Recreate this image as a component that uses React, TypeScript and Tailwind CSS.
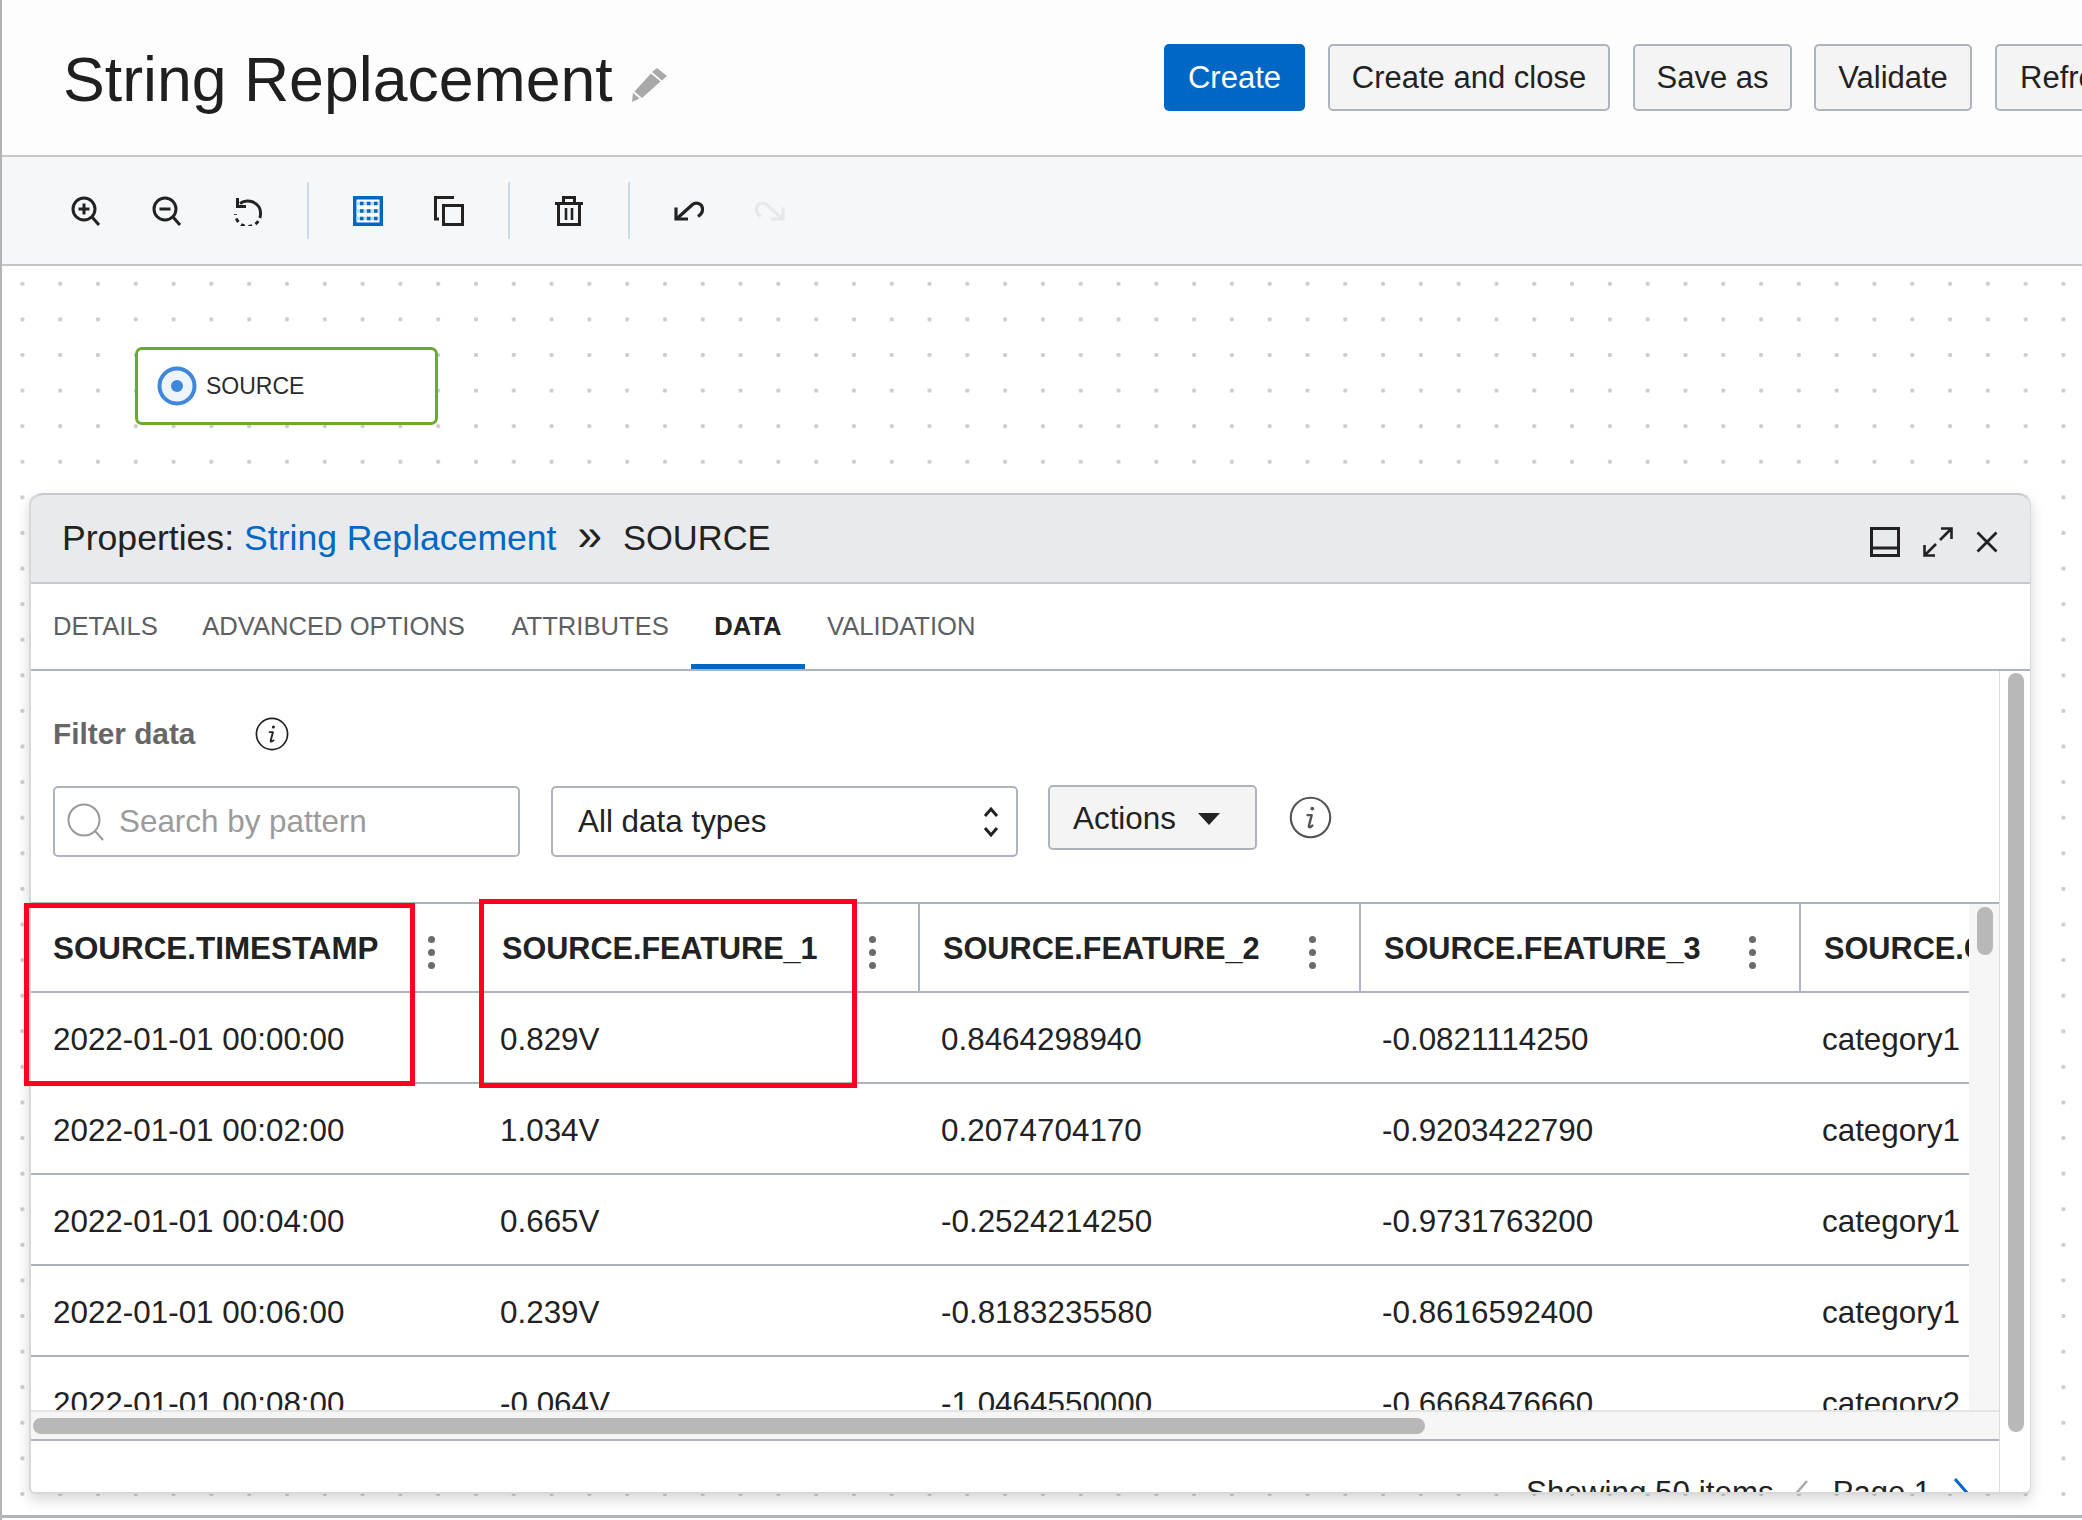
import React from 'react';

const columns = ['w-[446px]', 'w-[441px]', 'w-[441px]', 'w-[440px]', 'w-[200px]'];

const headers = [
  { label: 'SOURCE.TIMESTAMP', pad: 'pl-[22px] text-[31.400px]', kebab: 'right-[42px]' },
  { label: 'SOURCE.FEATURE_1', pad: 'pl-[25px] text-[30.600px]', kebab: 'right-[42px]' },
  { label: 'SOURCE.FEATURE_2', pad: 'pl-[23px] text-[30.700px]', kebab: 'right-[43px]' },
  { label: 'SOURCE.FEATURE_3', pad: 'pl-[23px] text-[30.700px]', kebab: 'right-[43px]' },
  { label: 'SOURCE.CATEGORY', pad: 'pl-[23px] text-[30.700px]', kebab: '' },
];

const rows = [
  ['2022-01-01 00:00:00', '0.829V', '0.8464298940', '-0.0821114250', 'category1'],
  ['2022-01-01 00:02:00', '1.034V', '0.2074704170', '-0.9203422790', 'category1'],
  ['2022-01-01 00:04:00', '0.665V', '-0.2524214250', '-0.9731763200', 'category1'],
  ['2022-01-01 00:06:00', '0.239V', '-0.8183235580', '-0.8616592400', 'category1'],
  ['2022-01-01 00:08:00', '-0.064V', '-1.0464550000', '-0.6668476660', 'category2'],
];

function ToolIcon({ children, className = 'text-[#222]' }: { children: React.ReactNode; className?: string }) {
  return (
    <svg viewBox="0 0 30 30" className={`h-[30px] w-[30px] ${className}`} fill="none" stroke="currentColor" strokeWidth="3">
      {children}
    </svg>
  );
}

function Separator() {
  return <div className="mx-[39px] h-[57px] w-[2px] bg-[#cfdbe4]" />;
}

function ToolSlot({ children }: { children: React.ReactNode }) {
  return <div className="flex w-[40px] justify-center">{children}</div>;
}

function Kebab() {
  return (
    <div className="flex flex-col gap-[6px]">
      <span className="h-[7px] w-[7px] rounded-full bg-[#6b6b6b]" />
      <span className="h-[7px] w-[7px] rounded-full bg-[#6b6b6b]" />
      <span className="h-[7px] w-[7px] rounded-full bg-[#6b6b6b]" />
    </div>
  );
}

function InfoIcon({ size }: { size: string }) {
  return (
    <svg viewBox="0 0 36 36" className={size} fill="none" stroke="currentColor" strokeWidth="1.8">
      <circle cx="18" cy="18" r="16.5" />
      <circle cx="19.5" cy="10.5" r="1.6" fill="currentColor" stroke="none" />
      <path d="M15.5 16h3.5l-2.4 9.2c-.3 1.2 1 1.4 3-.4" strokeWidth="2" strokeLinecap="round" strokeLinejoin="round" />
    </svg>
  );
}

export default function App() {
  return (
    <div className="relative flex h-[1520px] w-[2082px] flex-col overflow-hidden border-l-2 border-[#b4b4b4] bg-white font-['Liberation_Sans',Arial,sans-serif] text-[31px] text-[#222]">
      {/* Title bar */}
      <header className="flex h-[157px] shrink-0 items-start justify-between overflow-hidden border-b-2 border-[#c6c7c9] bg-[#fdfdfd]">
        <div className="flex items-center pl-[61px] pt-[41px]">
          <h1 className="text-[62.600px] leading-[76px] font-normal text-[#1f1f1f]">String Replacement</h1>
          <svg viewBox="0 0 36 36" className="mt-[12px] ml-[18px] h-[36px] w-[36px] text-[#a8a8a8]" fill="currentColor">
            <path d="M26 1l10 8-5 4.500-10-8.500zM20 6.500l9.500 8-18.500 16.500-7.500-6.500zM2 26l6.500 5.500L1 35z" />
          </svg>
        </div>
        <div className="flex w-[919px] shrink-0 gap-[23px] pt-[44px] pl-[1px]">
          <button className="h-[67px] w-[141px] shrink-0 rounded-[5px] bg-[#0067c5] pt-[2px] text-white">Create</button>
          <button className="h-[67px] w-[282px] shrink-0 rounded-[5px] border-2 border-[#aeb3bc] bg-[#f4f4f4] pt-[2px]">Create and close</button>
          <button className="h-[67px] w-[159px] shrink-0 rounded-[5px] border-2 border-[#aeb3bc] bg-[#f4f4f4] pt-[2px]">Save as</button>
          <button className="-ml-px h-[67px] w-[158px] shrink-0 rounded-[5px] border-2 border-[#aeb3bc] bg-[#f4f4f4] pt-[2px]">Validate</button>
          <button className="h-[67px] w-[160px] shrink-0 rounded-[5px] border-2 border-[#aeb3bc] bg-[#f4f4f4] pt-[2px] pl-[2px] text-left">
            <span className="pl-[21px]">Refresh</span>
          </button>
        </div>
      </header>

      {/* Toolbar */}
      <div className="flex h-[109px] shrink-0 items-center border-b-2 border-[#c6c7c9] bg-[#f5f7f9] pl-[64px]">
        <ToolSlot>
          <ToolIcon>
            <circle cx="13" cy="13" r="11" />
            <path d="M13 7.500v11M7.500 13h11" />
            <path d="M21 21l7 8" />
          </ToolIcon>
        </ToolSlot>
        <div className="w-[41px]" />
        <ToolSlot>
          <ToolIcon>
            <circle cx="13" cy="13" r="11" />
            <path d="M7.500 13h11" />
            <path d="M21 21l7 8" />
          </ToolIcon>
        </ToolSlot>
        <div className="w-[41px]" />
        <ToolSlot>
          <ToolIcon>
            <path d="M7 7.500C13 3 22 5 26 11c1.200 2 1.700 4.500 1.500 7" strokeWidth="3" />
            <path d="M27.500 18A12.500 12.500 0 0 1 2.500 18" strokeWidth="3" strokeDasharray="4 3.600" />
            <path d="M4.500 2v8.500H13" strokeWidth="3" />
          </ToolIcon>
        </ToolSlot>
        <Separator />
        <ToolSlot>
          <svg viewBox="0 0 30 30" className="h-[30px] w-[30px]">
            <rect width="30" height="30" fill="#0067c5" />
            <rect x="3.500" y="3.500" width="23" height="23" fill="#fff" />
            <path d="M3.500 7.500h23M3.500 15h23M3.500 22.500h23" stroke="#bcd8f2" strokeWidth="3.500" />
            <path d="M7 5.800h3.500v3.500H7zM14 5.800h3.500v3.500H14zM21 5.800h3.500v3.500H21zM7 13.200h3.500v3.500H7zM14 13.200h3.500v3.500H14zM21 13.200h3.500v3.500H21zM7 20.700h3.500v3.500H7zM14 20.700h3.500v3.500H14zM21 20.700h3.500v3.500H21z" fill="#0067c5" />
          </svg>
        </ToolSlot>
        <div className="w-[41px]" />
        <ToolSlot>
          <ToolIcon>
            <path d="M20 1.500H1.500V23H5" />
            <rect x="9.500" y="9.500" width="19" height="19" />
          </ToolIcon>
        </ToolSlot>
        <Separator />
        <ToolSlot>
          <ToolIcon>
            <path d="M1 7.500h28M9.500 7V1.500h11V7" />
            <path d="M4.500 7.500v21h21v-21" />
            <path d="M12 12v12M18 12v12" strokeWidth="2.600" />
          </ToolIcon>
        </ToolSlot>
        <Separator />
        <ToolSlot>
          <ToolIcon>
            <path d="M2.500 23L18 9c4-3.500 10-1.500 10.500 3.500.3 3-1.500 6-4.500 8" strokeWidth="3.200" />
            <path d="M2 11.500V23h12" strokeWidth="3.200" />
          </ToolIcon>
        </ToolSlot>
        <div className="w-[41px]" />
        <ToolSlot>
          <ToolIcon className="text-[#e6e9ec]">
            <path d="M27.500 23L12 9C8 5.500 2 7.500 1.500 12.500c-.3 3 1.500 6 4.500 8" strokeWidth="3.200" />
            <path d="M28 11.500V23H16" strokeWidth="3.200" />
          </ToolIcon>
        </ToolSlot>
      </div>

      {/* Canvas */}
      <div className="h-[1252px] shrink-0 border-b-[3px] border-[#aeb3bc] bg-white bg-[radial-gradient(circle,#cccccc_1.8px,transparent_2.4px)] bg-[size:37.8px_35.6px] bg-[position:1.5px_0px] pt-[81px]">
        <div className="ml-[133px] flex h-[78px] w-[303px] items-center rounded-[7px] border-[3px] border-[#6aab2d] bg-white pl-[19px]">
          <svg viewBox="0 0 40 40" className="h-[40px] w-[40px]">
            <circle cx="20" cy="20" r="17.500" fill="#eef4fb" stroke="#3f87dc" strokeWidth="4" />
            <circle cx="20" cy="20" r="6" fill="#3f87dc" />
          </svg>
          <span className="ml-[9px] text-[23px] text-[#2b2b2b]">SOURCE</span>
        </div>

        {/* Properties panel */}
        <section className="relative mt-[68px] ml-[27px] flex h-[1001px] w-[2002px] flex-col rounded-t-[12px] rounded-b-[6px] border-r border-b-2 border-l-2 border-[#d8d8d8] bg-white shadow-[0_6px_14px_rgba(0,0,0,0.16)]">
          <div className="flex h-[91px] shrink-0 items-center justify-between rounded-t-[12px] border-t-2 border-b-2 border-[#c6c8cc] bg-[#e8eaed] pr-[32px] pl-[31px]">
            <div className="-mt-[4px] flex items-baseline text-[35.600px] leading-[44px]">
              <span>Properties:</span>
              <span className="ml-[10px] text-[#0067c5]">String Replacement</span>
              <span className="mx-[21px] text-[44px] leading-none">»</span>
              <span className="text-[34.500px]">SOURCE</span>
            </div>
            <div className="flex items-center gap-[23px] pt-[6px]">
              <svg viewBox="0 0 30 30" className="h-[30px] w-[30px]" fill="none" stroke="#222" strokeWidth="3">
                <rect x="1.500" y="1.500" width="27" height="27" />
                <path d="M1 21h28" />
              </svg>
              <svg viewBox="0 0 30 30" className="h-[30px] w-[30px]" fill="none" stroke="#222" strokeWidth="2.600">
                <path d="M18 1.500h10.500V12M28.500 1.500L17 13M1.500 18v10.500H12M1.500 28.500L13 17" />
              </svg>
              <svg viewBox="0 0 22 22" className="h-[22px] w-[22px]" fill="none" stroke="#222" strokeWidth="2.800">
                <path d="M1.500 1.500l19 19M20.500 1.500l-19 19" />
              </svg>
            </div>
          </div>

          <nav className="flex h-[87px] shrink-0 border-b-2 border-[#aeb3bc] text-[25.600px] text-[#5c5f63]">
            <div className="flex h-[85px] items-center px-[22px]">DETAILS</div>
            <div className="flex h-[85px] items-center px-[22.500px]">ADVANCED OPTIONS</div>
            <div className="flex h-[85px] items-center pr-[22.500px] pl-[24px]">ATTRIBUTES</div>
            <div className="flex h-[85px] items-center border-b-[5px] border-[#0067c5] px-[23px] pt-[5px] font-bold text-[#222]">DATA</div>
            <div className="flex h-[85px] items-center px-[22.500px]">VALIDATION</div>
          </nav>

          <div className="flex min-h-0 flex-1">
            <div className="flex w-[1969px] shrink-0 flex-col border-r border-[#dcdcdc]">
              {/* Filters */}
              <div className="mt-[45px] flex h-[36px] shrink-0 items-center pl-[22px]">
                <span className="w-[202px] text-[29.800px] font-bold text-[#666]">Filter data</span>
                <InfoIcon size="h-[34px] w-[34px]" />
              </div>
              <div className="mt-[34px] flex h-[71px] shrink-0 items-start pl-[22px] text-[31.400px]">
                <div className="flex h-[71px] w-[467px] items-center rounded-[5px] border-2 border-[#aeb3bc] pl-[12px] text-[#9b9b9b]">
                  <svg viewBox="0 0 38 38" className="h-[38px] w-[38px]" fill="none" stroke="#9a9a9a" strokeWidth="2">
                    <circle cx="17" cy="17" r="15.500" />
                    <path d="M28 28l8 9" />
                  </svg>
                  <span className="ml-[14px]">Search by pattern</span>
                </div>
                <div className="relative ml-[31px] flex h-[71px] w-[467px] items-center rounded-[5px] border-2 border-[#aeb3bc] pl-[25px]">
                  All data types
                  <svg viewBox="0 0 16 32" className="absolute top-[18px] right-[17px] h-[32px] w-[16px]" fill="none" stroke="#222" strokeWidth="3">
                    <path d="M2 10l6-7 6 7M2 22l6 7 6-7" />
                  </svg>
                </div>
                <div className="ml-[30px] -mt-px flex h-[65px] w-[209px] items-center rounded-[5px] border-2 border-[#aeb3bc] bg-[#f4f4f4] pt-[2px] pl-[23px]">
                  Actions
                  <svg viewBox="0 0 22 12" className="ml-[22px] h-[12px] w-[22px]" fill="#222">
                    <path d="M0 0h22L11 12z" />
                  </svg>
                </div>
                <div className="ml-[32px] mt-[10px] text-[#555]">
                  <InfoIcon size="h-[43px] w-[43px]" />
                </div>
              </div>

              {/* Table */}
              <div className="mt-[45px] flex h-[508px] shrink-0 border-t-2 border-[#aeb3bc]">
                <div className="w-[1938px] shrink-0 overflow-hidden">
                  <div className="flex h-[89px] w-[2100px] border-b-2 border-[#aeb3bc] font-bold">
                    {headers.map((header, i) => (
                      <div
                        key={header.label}
                        className={`relative flex shrink-0 items-center whitespace-nowrap pt-[3px] ${columns[i]} ${header.pad} ${i > 1 ? 'border-l-2 border-[#aeb3bc]' : ''}`}
                      >
                        {header.label}
                        {i < 4 && (
                          <div className={`absolute top-[32px] ${header.kebab}`}>
                            <Kebab />
                          </div>
                        )}
                      </div>
                    ))}
                  </div>
                  {rows.map((row) => (
                    <div key={row[0]} className="flex h-[91px] w-[2100px] items-center border-b-2 border-[#aeb3bc] pt-[5px] text-[31.400px]">
                      {row.map((cell, i) => (
                        <div key={i} className={`shrink-0 whitespace-nowrap ${columns[i]} ${i === 0 ? 'pl-[22px]' : 'pl-[23px]'}`}>
                          {cell}
                        </div>
                      ))}
                    </div>
                  ))}
                </div>
                <div className="w-[30px] shrink-0 bg-[#f6f6f6] pl-[8px] pt-[3px]">
                  <div className="h-[48px] w-[16px] rounded-full bg-[#b8b8b8]" />
                </div>
              </div>

              {/* Horizontal scrollbar */}
              <div className="flex h-[31px] shrink-0 items-start border-t-2 border-b-2 border-[#e4e4e4] border-b-[#aeb3bc] bg-[#f6f6f6] pt-[6px] pl-[2px]">
                <div className="h-[16px] w-[1392px] rounded-full bg-[#b8b8b8]" />
              </div>

              {/* Footer */}
              <div className="flex min-h-0 flex-1 justify-end overflow-hidden pt-[34px] pr-[26px] leading-[36px]">
                <span className="text-[31.400px]">Showing 50 items</span>
                <svg viewBox="0 0 22 36" className="ml-[15px] h-[36px] w-[22px]" fill="none" stroke="#aaa" strokeWidth="2.600">
                  <path d="M18 6L4 22" />
                </svg>
                <span className="ml-[22px]">Page 1</span>
                <svg viewBox="0 0 22 36" className="ml-[20px] h-[36px] w-[22px]" fill="none" stroke="#0067c5" strokeWidth="3">
                  <path d="M4 4l14 16-14 16" />
                </svg>
              </div>
            </div>

            {/* Panel scrollbar */}
            <div className="w-[30px] shrink-0 pt-[2px] pl-[8px]">
              <div className="h-[759px] w-[16px] rounded-full bg-[#b8b8b8]" />
            </div>
          </div>

          {/* Red highlight boxes */}
          <div className="absolute top-[410px] left-[-7px] h-[183px] w-[391px] border-[5px] border-[#ff0020]" />
          <div className="absolute top-[406px] left-[448px] h-[189px] w-[378px] border-[5px] border-[#ff0020]" />
        </section>
      </div>

      {/* Stray bits of the window behind, on the left edge */}
      <div className="absolute top-[1353px] left-[-2px] h-[17px] w-[2px] bg-[#222]" />
      <div className="absolute top-[1488px] left-[-2px] h-[14px] w-[2px] bg-[#2b4bdb]" />
    </div>
  );
}
